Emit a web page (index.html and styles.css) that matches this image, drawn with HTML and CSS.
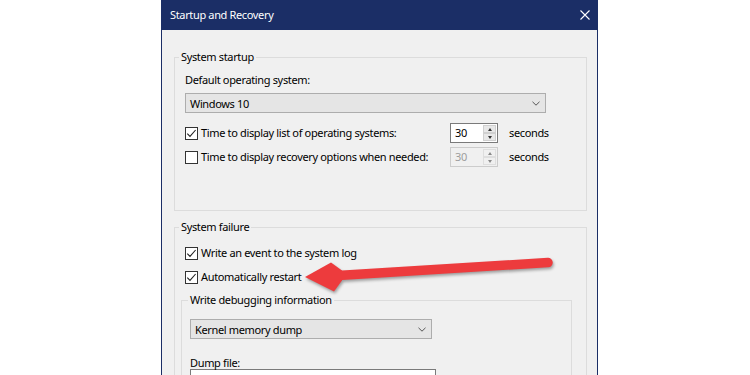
FILE: index.html
```html
<!DOCTYPE html>
<html lang="en">
<head>
<meta charset="utf-8">
<title>Startup and Recovery</title>
<link rel="stylesheet" href="styles.css">
</head>
<body>
<div class="stage">
  <div class="dialog">
    <div class="titlebar">
      <span class="title">Startup and Recovery</span>
      <svg class="close" width="10" height="10" viewBox="0 0 10 10"><path d="M0.5 0.5L9.5 9.5M9.5 0.5L0.5 9.5" stroke="#fff" stroke-width="1.1" fill="none"/></svg>
    </div>
    <div class="body">
      <fieldset class="group startup">
        <legend>System startup</legend>
        <div class="label first">Default operating system:</div>
        <div class="combo wide"><span>Windows 10</span><svg class="chev" width="8" height="5" viewBox="0 0 8 5"><path d="M0.5 0.8L4 4.2L7.5 0.8" stroke="#555" stroke-width="1" fill="none"/></svg></div>
        <div class="optrow r1">
          <div class="check"><span class="box"><svg width="11" height="11" viewBox="0 0 11 11"><path d="M1.3 5.6L4 8.4L9.6 2" stroke="#222" stroke-width="1.1" fill="none"/></svg></span>Time to display list of operating systems:</div>
          <div class="spin"><span class="val">30</span><span class="btns"><span class="up"></span><span class="dn"></span></span></div>
          <span class="unit">seconds</span>
        </div>
        <div class="optrow r2">
          <div class="check"><span class="box"></span>Time to display recovery options when needed:</div>
          <div class="spin disabled"><span class="val">30</span><span class="btns"><span class="up"></span><span class="dn"></span></span></div>
          <span class="unit">seconds</span>
        </div>
      </fieldset>
      <fieldset class="group failure">
        <legend>System failure</legend>
        <div class="check row first-row"><span class="box"><svg width="11" height="11" viewBox="0 0 11 11"><path d="M1.3 5.6L4 8.4L9.6 2" stroke="#222" stroke-width="1.1" fill="none"/></svg></span>Write an event to the system log</div>
        <div class="check row second-row"><span class="box"><svg width="11" height="11" viewBox="0 0 11 11"><path d="M1.3 5.6L4 8.4L9.6 2" stroke="#222" stroke-width="1.1" fill="none"/></svg></span>Automatically restart</div>
        <fieldset class="group debug">
          <legend>Write debugging information</legend>
          <div class="combo narrow"><span>Kernel memory dump</span><svg class="chev" width="8" height="5" viewBox="0 0 8 5"><path d="M0.5 0.8L4 4.2L7.5 0.8" stroke="#555" stroke-width="1" fill="none"/></svg></div>
          <div class="label dump">Dump file:</div>
          <div class="textbox">%SystemRoot%\MEMORY.DMP</div>
        </fieldset>
      </fieldset>
    </div>
  </div>
  <svg class="arrow" width="750" height="375" viewBox="0 0 750 375">
    <g class="arrow-shape">
      <line x1="338" y1="275.5" x2="548" y2="262.5" stroke="#ed3b3d" stroke-width="9.5" stroke-linecap="round"/>
      <polygon points="305,277 331,262.5 342,270.5 342,280.5 334,291.5" fill="#ed3b3d"/>
    </g>
  </svg>
</div>
</body>
</html>
```

FILE: styles.css
```css
html, body {
  margin: 0;
  padding: 0;
  background: #ffffff;
}

.stage {
  position: relative;
  width: 750px;
  height: 375px;
  overflow: hidden;
  background: #ffffff;
  font-family: "Noto Sans", "Open Sans", sans-serif;
  font-size: 11px;
  letter-spacing: -0.35px;
  color: #000;
}

.dialog {
  margin-left: 161px;
  width: 437px;
  height: 420px;
  box-sizing: border-box;
  border-left: 1px solid #1b2e66;
  border-right: 1px solid #1b2e66;
  background: #f0f0f0;
}

.titlebar {
  height: 30px;
  background: #1b2e66;
  display: flex;
  align-items: center;
  justify-content: space-between;
  padding: 0 7px 0 8px;
}

.title {
  color: #ffffff;
  font-size: 11px;
  line-height: 16px;
}

.close {
  display: block;
}

.group {
  margin: 0;
  border: 1px solid #dcdcdc;
  padding: 0 10px;
  min-width: 0;
}

.group legend {
  padding: 0 2px;
  margin-left: -6px;
  line-height: 16px;
  color: #000;
}

.startup {
  margin: 19px 10px 0 12px;
  padding-bottom: 43px;
}

.failure {
  margin: 8px 10px 0 12px;
  padding-bottom: 40px;
}

.debug {
  margin: 5px 0 0 -4px;
  width: 391px;
  box-sizing: border-box;
  padding: 0 8px 30px 8px;
}

.debug legend {
  margin-left: -2px;
}

.label {
  line-height: 16px;
}

.label.first {
  margin-top: 7px;
}

.combo {
  box-sizing: border-box;
  height: 20px;
  background: #e5e5e5;
  border: 1px solid #adadad;
  display: flex;
  align-items: center;
  justify-content: space-between;
  padding: 0 5px 0 4px;
}

.combo .chev {
  display: block;
}

.combo.wide {
  width: 361px;
  margin-top: 5px;
}

.combo.narrow {
  width: 242px;
  margin-top: 11px;
}

.optrow {
  display: grid;
  grid-template-columns: 254px 48px auto;
  column-gap: 11px;
  align-items: center;
  height: 20px;
}

.optrow.r1 {
  margin-top: 10px;
}

.optrow.r2 {
  margin-top: 4px;
}

.check {
  display: flex;
  align-items: center;
  gap: 3px;
  line-height: 16px;
  white-space: nowrap;
}

.check.row {
  height: 20px;
}

.first-row {
  margin-top: 8px;
}

.second-row {
  margin-top: 4px;
}

.box {
  box-sizing: border-box;
  width: 13px;
  height: 13px;
  border: 1px solid #333;
  background: #ffffff;
  display: flex;
  align-items: center;
  justify-content: center;
  flex: none;
}

.box svg {
  display: block;
}

.spin {
  box-sizing: border-box;
  height: 20px;
  width: 48px;
  border: 1px solid #7a7a7a;
  background: #ffffff;
  display: flex;
  align-items: stretch;
}

.spin .val {
  flex: 1;
  padding-left: 4px;
  line-height: 18px;
}

.spin .btns {
  width: 14px;
  display: flex;
  flex-direction: column;
  padding: 1px 1px 1px 0;
  box-sizing: border-box;
}

.spin .up,
.spin .dn {
  flex: 1;
  background: #e8e8e8;
  border: 1px solid #d0d0d0;
  display: flex;
  align-items: center;
  justify-content: center;
}

.spin .up::after {
  content: "";
  border-left: 2.5px solid transparent;
  border-right: 2.5px solid transparent;
  border-bottom: 3px solid #333;
}

.spin .dn::after {
  content: "";
  border-left: 2.5px solid transparent;
  border-right: 2.5px solid transparent;
  border-top: 3px solid #333;
}

.spin.disabled {
  border-color: #cccccc;
  background: #f0f0f0;
  color: #9d9d9d;
}

.spin.disabled .up,
.spin.disabled .dn {
  background: #f0f0f0;
  border-color: #dedede;
}

.spin.disabled .up::after {
  border-bottom-color: #8a8a8a;
}

.spin.disabled .dn::after {
  border-top-color: #8a8a8a;
}

.unit {
  line-height: 16px;
}

.label.dump {
  margin-top: 18px;
  line-height: 12px;
}

.textbox {
  box-sizing: border-box;
  width: 246px;
  height: 22px;
  border: 1px solid #7a7a7a;
  background: #ffffff;
  padding: 2px 3px;
  line-height: 16px;
}

.arrow {
  position: absolute;
  left: 0;
  top: 0;
  pointer-events: none;
}

.arrow-shape {
  filter: drop-shadow(1px 2px 1.5px rgba(0, 0, 0, 0.35));
}
```
